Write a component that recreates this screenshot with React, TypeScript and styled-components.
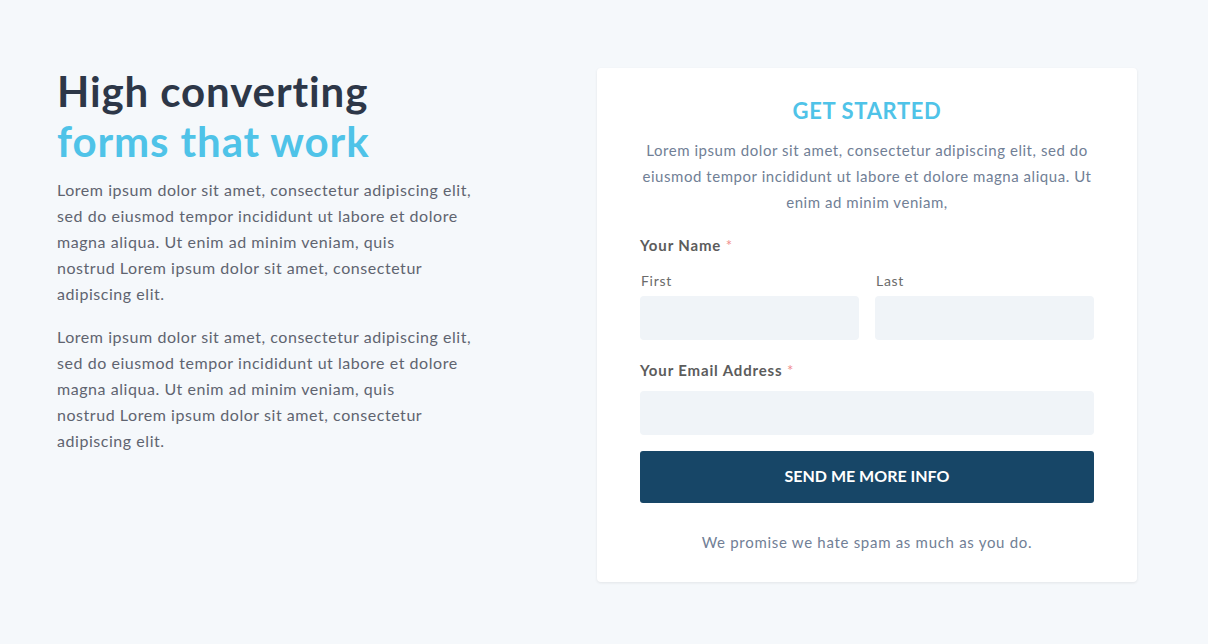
import React from 'react';
import styled, { createGlobalStyle } from 'styled-components';

const GlobalStyle = createGlobalStyle`
  * { box-sizing: border-box; }
  body {
    margin: 0;
    background: #f5f8fb;
    font-family: Lato, "Noto Sans", sans-serif;
  }
`;

const Page = styled.main`
  min-height: 644px;
  padding: 68px 71px 0 57px;
  display: grid;
  grid-template-columns: 540px 540px;
  align-items: start;
`;

const Intro = styled.section`
  max-width: 420px;
`;

const Heading = styled.h1`
  margin: -2px 0 11px;
  font-size: 42px;
  line-height: 50px;
  font-weight: 700;
  letter-spacing: 0.9px;
  color: #2d3748;
`;

const Accent = styled.span`
  display: block;
  color: #4fc3e8;
`;

const Paragraph = styled.p`
  margin: 0 0 17px;
  font-size: 16px;
  line-height: 26px;
  letter-spacing: 0.55px;
  color: #5f6470;
`;

const Card = styled.section`
  background: #fff;
  border-radius: 4px;
  box-shadow: 0 1px 3px rgba(0, 0, 0, 0.08);
  padding: 29px 43px 29px;
`;

const CardTitle = styled.h2`
  margin: 0;
  text-align: center;
  font-size: 22px;
  line-height: 28px;
  font-weight: 700;
  letter-spacing: 0.65px;
  color: #4fc3e8;
`;

const CardText = styled.p`
  margin: 12px 0 20px;
  text-align: center;
  font-size: 15px;
  line-height: 26px;
  letter-spacing: 0.55px;
  color: #718096;
`;

const FieldGroup = styled.div`
  margin-bottom: 20px;
`;

const Label = styled.div`
  font-size: 15px;
  line-height: 20px;
  font-weight: 700;
  letter-spacing: 0.85px;
  color: #5c5c5c;
`;

const Required = styled.span`
  color: #f08c8c;
  font-weight: 400;
`;

const Row = styled.div`
  display: grid;
  grid-template-columns: 1fr 1fr;
  gap: 16px;
  margin-top: 17px;
`;

const SubLabel = styled.div`
  font-size: 14px;
  line-height: 18px;
  color: #6b6b6b;
  letter-spacing: 0.7px;
  padding-left: 1px;
  margin-bottom: 6px;
`;

const Input = styled.input<{ $gap?: number }>`
  display: block;
  width: 100%;
  height: 44px;
  margin-top: ${(p) => p.$gap ?? 0}px;
  border: 0;
  border-radius: 4px;
  background: #f0f4f8;
  font: inherit;
`;

const Button = styled.button`
  display: block;
  width: 100%;
  height: 52px;
  margin-top: -4px;
  padding: 0 0 3px;
  border: 0;
  border-radius: 3px;
  background: #174667;
  color: #fff;
  font-family: inherit;
  font-size: 16px;
  font-weight: 700;
`;

const Note = styled.p`
  margin: 28px 0 0;
  text-align: center;
  font-size: 15px;
  line-height: 22px;
  letter-spacing: 0.7px;
  color: #718096;
`;

const App = () => {
  return (
    <>
      <GlobalStyle />
      <Page>
        <Intro>
          <Heading>
            High converting
            <Accent>forms that work</Accent>
          </Heading>
          <Paragraph>
            Lorem ipsum dolor sit amet, consectetur adipiscing elit, sed do eiusmod tempor
            incididunt ut labore et dolore magna aliqua. Ut enim ad minim veniam, quis
            <br />
            nostrud Lorem ipsum dolor sit amet, consectetur adipiscing elit.
          </Paragraph>
          <Paragraph>
            Lorem ipsum dolor sit amet, consectetur adipiscing elit, sed do eiusmod tempor
            incididunt ut labore et dolore magna aliqua. Ut enim ad minim veniam, quis
            <br />
            nostrud Lorem ipsum dolor sit amet, consectetur adipiscing elit.
          </Paragraph>
        </Intro>
        <Card>
          <CardTitle>GET STARTED</CardTitle>
          <CardText>
            Lorem ipsum dolor sit amet, consectetur adipiscing elit, sed do eiusmod tempor
            incididunt ut labore et dolore magna aliqua. Ut enim ad minim veniam,
          </CardText>
          <FieldGroup>
            <Label>
              Your Name <Required>*</Required>
            </Label>
            <Row>
              <div>
                <SubLabel>First</SubLabel>
                <Input type="text" />
              </div>
              <div>
                <SubLabel>Last</SubLabel>
                <Input type="text" />
              </div>
            </Row>
          </FieldGroup>
          <FieldGroup>
            <Label>
              Your Email Address <Required>*</Required>
            </Label>
            <Input type="email" $gap={11} />
          </FieldGroup>
          <Button type="button">SEND ME MORE INFO</Button>
          <Note>We promise we hate spam as much as you do.</Note>
        </Card>
      </Page>
    </>
  );
};

export default App;
